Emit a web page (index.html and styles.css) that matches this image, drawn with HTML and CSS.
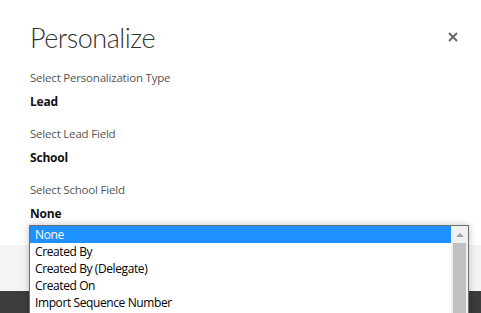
FILE: index.html
```html
<!DOCTYPE html>
<html>
<head>
<meta charset="utf-8">
<link rel="stylesheet" href="styles.css">
</head>
<body>
<div class="dialog">
  <div class="content">
    <div class="header">
      <h1 class="title">Personalize</h1>
      <button class="close" aria-label="Close">
        <svg width="10" height="10" viewBox="0 0 10 10"><path d="M1 1 L9 9 M9 1 L1 9" stroke="#666" stroke-width="2" fill="none"/></svg>
      </button>
    </div>
    <div class="field">
      <div class="label">Select Personalization Type</div>
      <div class="value">Lead</div>
    </div>
    <div class="field">
      <div class="label">Select Lead Field</div>
      <div class="value">School</div>
    </div>
    <div class="field">
      <div class="label">Select School Field</div>
      <div class="value select-host">None
        <div class="dropdown">
          <ul class="options">
            <li class="option selected">None</li>
            <li class="option">Created By</li>
            <li class="option">Created By (Delegate)</li>
            <li class="option">Created On</li>
            <li class="option">Import Sequence Number</li>
          </ul>
          <div class="scrollbar">
            <div class="arrow"><span class="tri"></span></div>
            <div class="thumb"></div>
          </div>
        </div>
      </div>
    </div>
  </div>
  <div class="footer"></div>
</div>
<div class="backdrop"></div>
</body>
</html>
```

FILE: styles.css
```css
html, body {
  margin: 0;
  padding: 0;
}
body {
  width: 481px;
  height: 313px;
  overflow: hidden;
  font-family: "Open Sans", "Noto Sans", "Liberation Sans", sans-serif;
  background: #3c3c3c;
}
.dialog {
  height: 291px;
  display: flex;
  flex-direction: column;
  background: #fff;
}
.content {
  flex: 1;
  padding: 20px 0 0 30px;
  background: #fff;
}
.header {
  display: flex;
  align-items: center;
  justify-content: space-between;
  height: 36px;
  margin-bottom: 14px;
}
.title {
  margin: 0;
  font-family: "Lato", "Open Sans", sans-serif;
  font-size: 27px;
  line-height: 36px;
  font-weight: 300;
  color: #333;
  letter-spacing: -0.5px;
}
.close {
  border: 0;
  background: none;
  padding: 0;
  width: 10px;
  height: 10px;
  margin-right: 23px;
  margin-top: -2px;
  display: block;
}
.close svg {
  display: block;
}
.field {
  margin-bottom: 16px;
}
.label {
  font-size: 11.5px;
  line-height: 16px;
  color: #555;
  margin-bottom: 8px;
  letter-spacing: -0.2px;
}
.value {
  font-size: 12px;
  line-height: 16px;
  font-weight: 700;
  color: #111;
  letter-spacing: -0.2px;
}
.select-host {
  position: relative;
}
.dropdown {
  position: absolute;
  left: -1px;
  top: 19px;
  width: 438px;
  height: 100px;
  border: 1px solid #6f6f6f;
  background: #fff;
  box-shadow: 0 0 7px rgba(0, 0, 0, 0.25);
  display: flex;
  font-weight: 400;
}
.options {
  list-style: none;
  margin: 0;
  padding: 0;
  flex: 1;
}
.option {
  height: 17px;
  line-height: 17px;
  padding-left: 5px;
  font-size: 12px;
  color: #000;
  letter-spacing: -0.4px;
  white-space: nowrap;
}
.option.selected {
  background: #1e90ff;
  color: #fff;
}
.scrollbar {
  width: 17px;
  background: #f0f0f0;
  display: flex;
  flex-direction: column;
  align-items: center;
}
.arrow {
  height: 17px;
  width: 17px;
  display: flex;
  align-items: center;
  justify-content: center;
}
.tri {
  width: 0;
  height: 0;
  border-left: 4px solid transparent;
  border-right: 4px solid transparent;
  border-bottom: 4px solid #a3a3a3;
}
.thumb {
  width: 13px;
  flex: 1;
  background: #c1c1c1;
}
.footer {
  height: 46px;
  background: #f4f4f4;
}
.backdrop {
  height: 22px;
  background: #3c3c3c;
}
```
